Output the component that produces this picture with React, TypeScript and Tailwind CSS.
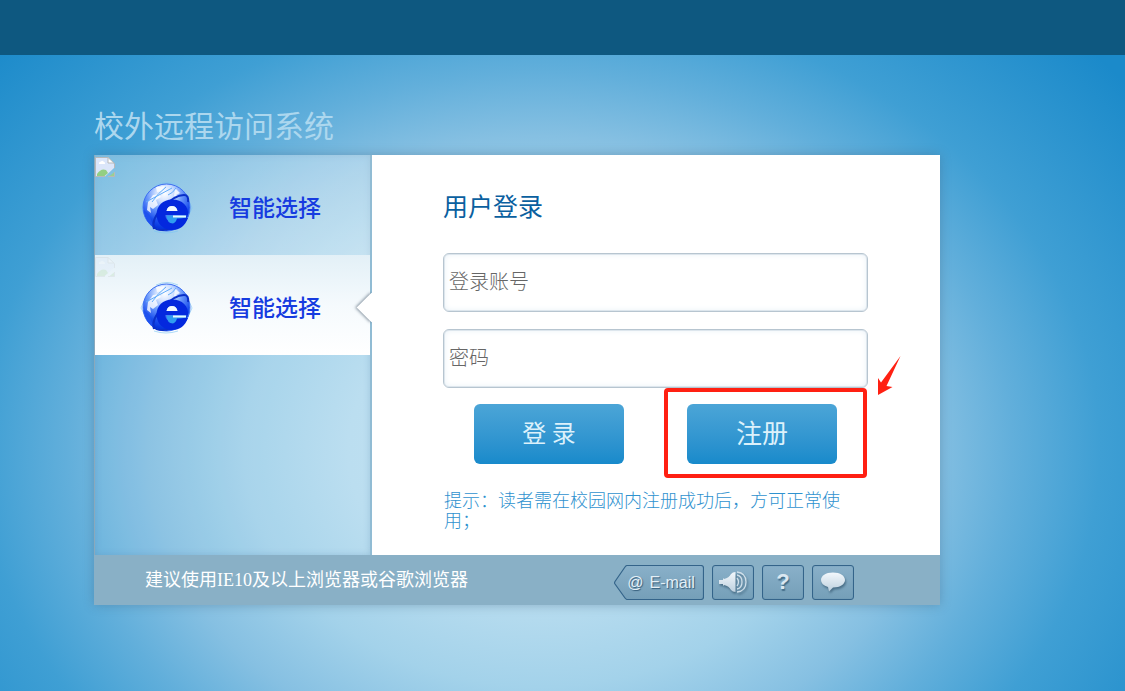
import React, { useState } from "react";

const BrokenImage: React.FC<{ faded?: boolean }> = ({ faded }) => (
  <svg
    viewBox="0 0 20 20"
    className={`absolute left-0 top-0.5 h-5 w-5 ${faded ? "opacity-20" : ""}`}
    aria-hidden="true"
  >
    <path d="M1 .5h12l6 6V11l-9 8.500H1z" fill="#dbe6fa" />
    <path d="M13 .5V6h6z" fill="#fff" />
    <path d="M2 19.500V17q4-6 9-4l2 3-4 3.500z" fill="#93cf83" />
    <path d="M4 6q0-1.500 2-1.500Q7 3 8.500 4.500 10.500 5 10 7H4z" fill="#fff" />
    <path d="M14 19.500 19.500 15v4.500z" fill="#9ccf8f" />
    <path
      d="M10 19.500H.5V.5H13l6.500 6V11M13 .5V6h6M13 19.500h6.500V15"
      fill="none"
      stroke="#b9b9b9"
    />
  </svg>
);

const GlobeIcon: React.FC<{ id: string }> = ({ id }) => (
  <svg viewBox="0 0 54 54" className="h-[54px] w-[54px]" aria-hidden="true">
    <defs>
      <radialGradient id={id} cx="46%" cy="20%" r="74%">
        <stop offset="0" stopColor="#ffffff" />
        <stop offset=".25" stopColor="#cfe0ff" />
        <stop offset=".5" stopColor="#6c9afb" />
        <stop offset=".8" stopColor="#1c50ee" />
        <stop offset="1" stopColor="#0535dc" />
      </radialGradient>
    </defs>
    <path
      d="M17 4Q28-1 39 4M2 27l3-7M2 27l5 9M53 27l-3-7M53 27l-4 9M15 50q12 4 24 0"
      fill="none"
      stroke="#7cc4f3"
      opacity=".6"
    />
    <circle
      cx="27.500"
      cy="26.500"
      r="23.500"
      fill={`url(#${id})`}
      stroke="#3c6ff2"
    />
    <path
      d="m9 21 5-7 6-1 2 3-5 3 2 5-5 4-3-2 1 6-4-3zM36 7l5 5-4 2 3 3-5-2zM17 6l9-1-3 5-5 1z"
      fill="#fff"
      opacity=".8"
    />
    <path
      d="M7 21 33 7M27 6q-8 6-14 15M37 7q-3 5-8 7"
      fill="none"
      stroke="#62adfa"
    />
    <path d="M4.500 29Q7 42 15 47L10 33z" fill="#1f52ee" />
    {/* orbit ring */}
    <path
      d="M15 48Q12 38 24 26T45 14q5 0 4 7M16 46q0 3 8 3 12-1 23-12"
      fill="none"
      stroke="#0a30c8"
      strokeWidth="2"
    />
    <path
      d="M33 18.500c-9 0-15.500 6.500-15.500 15S24 49 33 49c8 0 13-4 16-12h-11q-2 3-5 3c-4 0-6.500-2-6.500-5v-1h22.500c1-9-6-15.500-15.500-15.500zM27.500 30q1-5 5.500-5t5.500 5z"
      fill="#0428de"
    />
    <path d="M27.500 30q1-5 5.500-5t5.500 5z" fill="#f2f9ff" />
    <path d="M27.500 34.500H47v2q-4 1-9 1-1 4-4 5-6 0-6.500-8z" fill="#2f9cf0" />
    <path d="M34 34.500h13v2H34z" fill="#e6f7ff" />
  </svg>
);

const EntryTab: React.FC<{
  id: string;
  selected: boolean;
  onSelect: () => void;
}> = ({ id, selected, onSelect }) => (
  <button
    type="button"
    onClick={onSelect}
    aria-pressed={selected}
    className={`relative flex h-[100px] w-full items-center gap-9 pl-11 pt-1.5 text-[23px] leading-8 font-medium text-[#163be0] ${
      selected
        ? "bg-linear-to-b from-[#e3f0f7] via-[#f5fafd] to-white"
        : "bg-linear-to-b from-white/30 to-white/35"
    }`}
  >
    <BrokenImage faded={selected} />
    <GlobeIcon id={id} />
    <span className="pb-1">智能选择</span>
    {selected && (
      <span className="absolute -right-3 top-[42px] h-[21px] w-[21px] rotate-45 bg-white shadow-[-1px_1px_3px_rgba(60,80,100,0.6)]" />
    )}
  </button>
);

const ICON_BUTTON =
  "flex h-[35px] w-[42px] items-center justify-center rounded-[3px] border border-[#34648a] bg-linear-to-b from-[#89b0c9] to-[#759fb8] shadow-[inset_0_0_1px_#5583a3]";

const ICON_SHADOW =
  "[filter:drop-shadow(1px_2px_1px_rgba(45,80,105,0.65))]";

const FooterButtons = () => (
  <div className="flex gap-2">
    <svg width="0" height="0" className="absolute" aria-hidden="true">
      <linearGradient id="silver" x1="0" y1="0" x2="0" y2="1">
        <stop offset="0" stopColor="#f3f8fc" />
        <stop offset="1" stopColor="#bdd0de" />
      </linearGradient>
    </svg>
    <button
      type="button"
      className="relative h-[35px] w-[90px] pl-1 pt-0.5 font-['Liberation_Sans',sans-serif] text-[16px] leading-5 text-[#e4eff6]"
    >
      <svg
        viewBox="0 0 90 35"
        className="absolute inset-0 h-full w-full"
        aria-hidden="true"
      >
        <defs>
          <linearGradient id="mail" x1="0" y1="0" x2="0" y2="1">
            <stop offset="0" stopColor="#89b0c9" />
            <stop offset="1" stopColor="#759fb8" />
          </linearGradient>
        </defs>
        <path
          d="M13.500.5H87q2.500 0 2.500 2.500v29q0 2.500-2.500 2.500H13.500q-1.500 0-2.500-1.500L1 19q-.8-1.200 0-2.500L11 2q1-1.500 2.500-1.500z"
          fill="url(#mail)"
          stroke="#34648a"
          strokeWidth="1.200"
        />
      </svg>
      <span className="relative flex items-center justify-center gap-1.5 text-shadow-[1px_1px_1px_#315a78]">
        <span>@</span>
        <span>E-mail</span>
      </span>
    </button>
    <button type="button" className={ICON_BUTTON} aria-label="公告">
      <svg viewBox="0 0 28 22" className={`h-[22px] w-7 ${ICON_SHADOW}`}>
        <path
          d="M0 9h4V7.500h1V14.500H4V13H0zM5 8q5-1 7-5 1.500-2 4.500-2v20q-3 0-4.500-2-2-4-7-5z"
          fill="url(#silver)"
        />
        <path
          d="M18 7q3 4 0 8M18 4q5 1 5 7t-5 7M18 1q9 1 9 10t-9 10"
          fill="none"
          stroke="#cfdfea"
          strokeWidth="1.300"
        />
      </svg>
    </button>
    <button type="button" className={ICON_BUTTON} aria-label="帮助">
      <span className="font-['Liberation_Sans',sans-serif] text-[22px] leading-6 font-bold text-[#dce8f1] text-shadow-[1px_2px_1px_#456f8b]">
        ?
      </span>
    </button>
    <button type="button" className={ICON_BUTTON} aria-label="留言">
      <svg viewBox="0 0 26 22" className={`h-[22px] w-[26px] ${ICON_SHADOW}`}>
        <path
          d="M13 1.500C5.500 1.500 1 5 1 9q0 5 7 7l1 4.500 4-4C20.500 16.500 25 13 25 9S20.500 1.500 13 1.500z"
          fill="url(#silver)"
        />
      </svg>
    </button>
  </div>
);

const INPUT =
  "block h-[59px] w-full rounded-md border border-[#b7c5d0] bg-white px-[5px] pb-1 text-[20px] leading-7 font-light text-gray-700 shadow-[inset_0_0_0_1px_#dde6ed,inset_0_0_6px_#e5eff6] outline-none placeholder:text-[#666666] focus:border-[#4aa3d6]";

const ACTION =
  "h-[60px] w-[150px] rounded-md bg-linear-to-b from-[#4ba5d7] to-[#178acb] pb-1 leading-8 text-[#dcf1fb]";

const LoginForm = () => {
  const [account, setAccount] = useState("");
  const [password, setPassword] = useState("");

  return (
    <form
      className="relative z-10 flex-1 bg-white pl-[71px] pr-[72px] pt-[30px]"
      onSubmit={(e) => e.preventDefault()}
    >
      <h2 className="text-[25px] leading-10 text-[#0a609f]">用户登录</h2>
      <div className="mt-7 space-y-[17px]">
        <input
          type="text"
          aria-label="登录账号"
          placeholder="登录账号"
          value={account}
          onChange={(e) => setAccount(e.target.value)}
          className={INPUT}
        />
        <input
          type="password"
          aria-label="密码"
          placeholder="密码"
          value={password}
          onChange={(e) => setPassword(e.target.value)}
          className={INPUT}
        />
      </div>
      <div className="mt-4 flex justify-between px-[31px]">
        <button type="submit" className={`${ACTION} text-[24px]`}>
          登 录
        </button>
        <div className="relative">
          <button type="button" className={`${ACTION} text-[26px]`}>
            注册
          </button>
          {/* Highlight around the register button */}
          <span className="pointer-events-none absolute -left-[23px] -top-4 h-[90px] w-[203px] rounded-sm border-4 border-[#ff2012]" />
          <svg
            viewBox="0 0 24 41"
            className="pointer-events-none absolute -top-12 left-[190px] h-[41px] w-6"
            aria-hidden="true"
          >
            <path
              d="M23.500 0 9.500 30 15.500 31 1 39V22l3 4.500z"
              fill="#ff2012"
            />
          </svg>
        </div>
      </div>
      <p className="mt-[25px] pl-px pr-6 text-[18px] leading-5 font-light text-[#2f92cf]">
        提示：读者需在校园网内注册成功后，方可正常使用；
      </p>
    </form>
  );
};

export default function App() {
  const [entry, setEntry] = useState(1);

  return (
    <div
      lang="zh-CN"
      className="flex min-h-screen flex-col bg-[#1b8aca] font-['Noto_Sans_CJK_SC',sans-serif]"
    >
      <header className="h-[55px] bg-[#0e5880]" />
      <main className="flex-1 bg-[radial-gradient(800px_640px_at_48%_395px,#c4e2f2_0,#b7dcef_24%,#a3d2ea_37%,#86c0e2_49%,#62afdb_59%,#3f9fd4_70%,#1b8aca_93%)] px-[94px] pb-12 pt-11">
        <div className="max-w-[846px]">
          <h1 className="pb-1.5 text-[30px] leading-[50px] text-[#acd7ee]">
            校外远程访问系统
          </h1>
          <div className="shadow-[0_0_10px_rgba(60,100,130,0.4)]">
            <div className="flex min-h-[400px]">
              <nav className="w-[278px] shrink-0 border-l border-r-2 border-l-[#8aa9bc] border-r-[#91bcd4] bg-white/5 shadow-[inset_0_0_6px_rgba(80,130,165,0.3)]">
                {[0, 1].map((i) => (
                  <EntryTab
                    key={i}
                    id={`globe-${i}`}
                    selected={entry === i}
                    onSelect={() => setEntry(i)}
                  />
                ))}
              </nav>
              <LoginForm />
            </div>
            <footer className="flex h-[50px] items-center justify-between bg-[#89b0c6] pl-[51px] pr-[86px] pt-1">
              <p className="pb-1 font-['Liberation_Serif','Noto_Sans_CJK_SC',serif] text-[18px] leading-6 text-white">
                建议使用IE10及以上浏览器或谷歌浏览器
              </p>
              <FooterButtons />
            </footer>
          </div>
        </div>
      </main>
    </div>
  );
}
